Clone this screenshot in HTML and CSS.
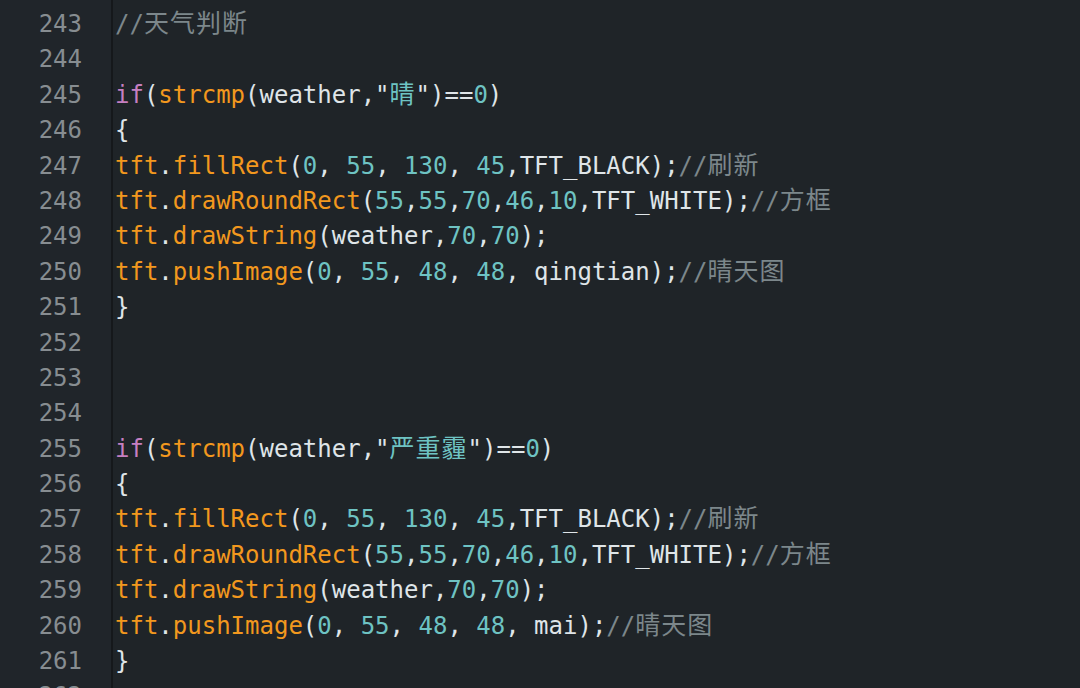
FILE: index.html
```html
<!DOCTYPE html>
<html>
<head>
<meta charset="utf-8">
<link rel="stylesheet" href="styles.css">
</head>
<body>
<div class="editor">
  <div class="gutter">
    <div class="ln">243</div><div class="ln">244</div><div class="ln">245</div><div class="ln">246</div>
    <div class="ln">247</div><div class="ln">248</div><div class="ln">249</div><div class="ln">250</div>
    <div class="ln">251</div><div class="ln">252</div><div class="ln">253</div><div class="ln">254</div>
    <div class="ln">255</div><div class="ln">256</div><div class="ln">257</div><div class="ln">258</div>
    <div class="ln">259</div><div class="ln">260</div><div class="ln">261</div><div class="ln">262</div>
  </div>
  <div class="code">
    <div class="line"><span class="cm">//<span class="cjk">天气判断</span></span></div>
    <div class="line"></div>
    <div class="line"><span class="kw">if</span>(<span class="fn">strcmp</span>(weather,"<span class="str cjk">晴</span>")==<span class="num">0</span>)</div>
    <div class="line">{</div>
    <div class="line"><span class="fn">tft</span>.<span class="fn">fillRect</span>(<span class="num">0</span>, <span class="num">55</span>, <span class="num">130</span>, <span class="num">45</span>,TFT_BLACK);<span class="cm">//<span class="cjk">刷新</span></span></div>
    <div class="line"><span class="fn">tft</span>.<span class="fn">drawRoundRect</span>(<span class="num">55</span>,<span class="num">55</span>,<span class="num">70</span>,<span class="num">46</span>,<span class="num">10</span>,TFT_WHITE);<span class="cm">//<span class="cjk">方框</span></span></div>
    <div class="line"><span class="fn">tft</span>.<span class="fn">drawString</span>(weather,<span class="num">70</span>,<span class="num">70</span>);</div>
    <div class="line"><span class="fn">tft</span>.<span class="fn">pushImage</span>(<span class="num">0</span>, <span class="num">55</span>, <span class="num">48</span>, <span class="num">48</span>, qingtian);<span class="cm">//<span class="cjk">晴天图</span></span></div>
    <div class="line">}</div>
    <div class="line"></div>
    <div class="line"></div>
    <div class="line"></div>
    <div class="line"><span class="kw">if</span>(<span class="fn">strcmp</span>(weather,"<span class="str cjk">严重霾</span>")==<span class="num">0</span>)</div>
    <div class="line">{</div>
    <div class="line"><span class="fn">tft</span>.<span class="fn">fillRect</span>(<span class="num">0</span>, <span class="num">55</span>, <span class="num">130</span>, <span class="num">45</span>,TFT_BLACK);<span class="cm">//<span class="cjk">刷新</span></span></div>
    <div class="line"><span class="fn">tft</span>.<span class="fn">drawRoundRect</span>(<span class="num">55</span>,<span class="num">55</span>,<span class="num">70</span>,<span class="num">46</span>,<span class="num">10</span>,TFT_WHITE);<span class="cm">//<span class="cjk">方框</span></span></div>
    <div class="line"><span class="fn">tft</span>.<span class="fn">drawString</span>(weather,<span class="num">70</span>,<span class="num">70</span>);</div>
    <div class="line"><span class="fn">tft</span>.<span class="fn">pushImage</span>(<span class="num">0</span>, <span class="num">55</span>, <span class="num">48</span>, <span class="num">48</span>, mai);<span class="cm">//<span class="cjk">晴天图</span></span></div>
    <div class="line">}</div>
    <div class="line"></div>
  </div>
</div>
</body>
</html>
```

FILE: styles.css
```css
html, body {
  margin: 0;
  padding: 0;
  background: #1f2428;
  overflow: hidden;
}
.editor {
  display: flex;
  width: 1080px;
  height: 688px;
  overflow: hidden;
  font-family: "DejaVu Sans Mono", "Liberation Mono", "Noto Sans CJK SC", monospace;
  font-size: 24px;
  color: #dfe5e8;
}
.gutter {
  width: 113px;
  flex: none;
  background: #20252a;
  border-right: 2px solid #15181b;
  padding-top: 7px;
  box-sizing: border-box;
}
.ln {
  height: 35.4px;
  line-height: 35.4px;
  text-align: right;
  padding-right: 29px;
  color: #878d91;
}
.code {
  flex: 1;
  padding-top: 7px;
  padding-left: 2px;
}
.line {
  height: 35.4px;
  line-height: 35.4px;
  white-space: pre;
}
.cjk {
  font-family: "Noto Sans CJK SC", sans-serif;
  font-size: 25px;
  letter-spacing: 1px;
  line-height: 0;
}
.kw { color: #c67fc1; }
.fn { color: #f2981e; }
.num { color: #6ec3c3; }
.str { color: #6ec3c3; }
.cm { color: #7c878b; }
```
